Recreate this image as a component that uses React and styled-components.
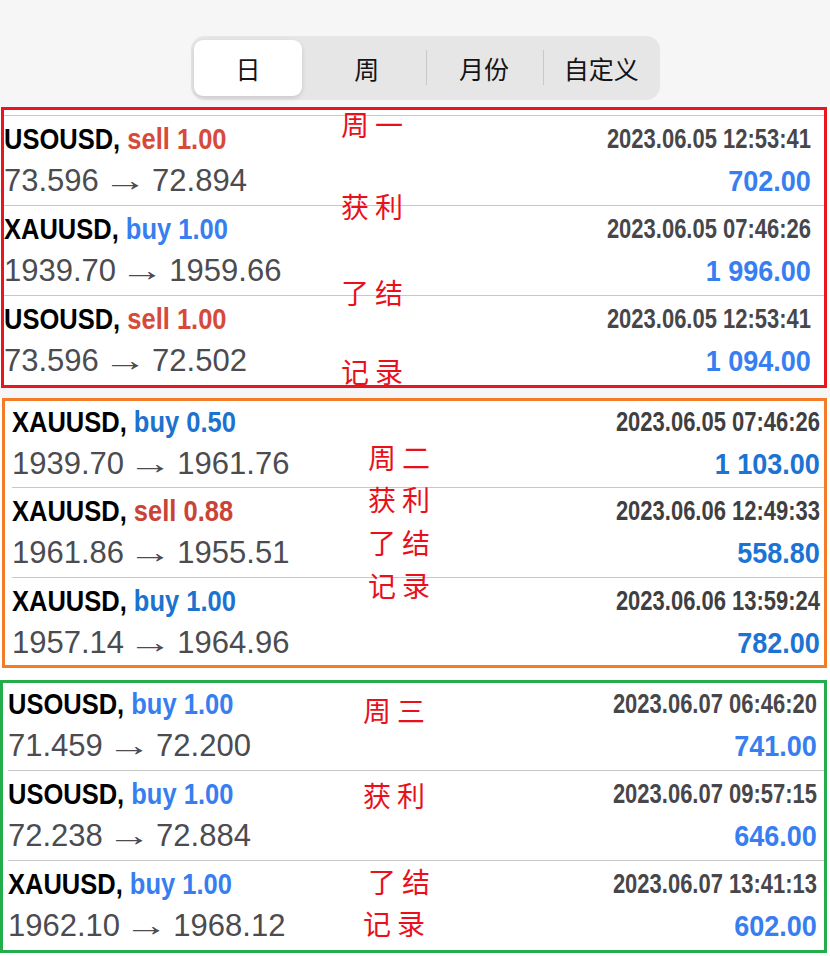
import React from "react";
import styled, { createGlobalStyle, css } from "styled-components";

const GlobalStyle = createGlobalStyle`
  html, body { margin: 0; padding: 0; background: #ffffff; }
  body { width: 830px; font-family: "Liberation Sans", Arial, sans-serif; }
`;

const Page = styled.div`
  display: flex;
  flex-direction: column;
  width: 830px;
  background: #ffffff;
`;

const Header = styled.header`
  box-sizing: border-box;
  height: 107px;
  padding: 36px 0 0 191px;
  background: #f6f6f6;
`;

const Segmented = styled.div`
  display: grid;
  grid-template-columns: repeat(4, 1fr);
  width: 469px;
  height: 64px;
  border-radius: 14px;
  background: #e6e6e7;
`;

const Segment = styled.div`
  position: relative;
  display: flex;
  align-items: center;
  justify-content: center;
  font-family: "Noto Sans CJK SC", sans-serif;
  font-size: 25px;
  color: #141414;
  ${(p) =>
    p.$active &&
    css`
      margin: 4px 6px 4px 3px;
      background: #ffffff;
      border-radius: 9px;
      box-shadow: 0 2px 5px rgba(0, 0, 0, 0.13);
    `}
  ${(p) =>
    p.$divider &&
    css`
      &::before {
        content: "";
        position: absolute;
        left: 0;
        top: 14px;
        bottom: 15px;
        width: 1px;
        background: #c9c9c9;
      }
    `}
`;

const Spacer = styled.div`
  flex: none;
  height: ${(p) => p.$h}px;
  background: ${(p) => p.$bg};
`;

const Box = styled.section`
  position: relative;
  flex: none;
  box-sizing: border-box;
  display: flex;
  flex-direction: column;
  overflow: hidden;
  margin-left: ${(p) => p.$ml}px;
  width: ${(p) => p.$w}px;
  height: ${(p) => p.$h}px;
  padding-top: ${(p) => p.$pt}px;
  border: 3px solid ${(p) => p.$color};
  background: #ffffff;
`;

const Row = styled.div`
  flex: none;
  box-sizing: border-box;
  display: flex;
  justify-content: space-between;
  height: ${(p) => p.$h}px;
  margin-left: ${(p) => p.$inset}px;
  padding: ${(p) => p.$pt}px ${(p) => p.$pr}px 0 0;
  border-top: ${(p) => (p.$sep ? "1px solid #c8c8c8" : "none")};
`;

const Main = styled.div`
  display: flex;
  flex-direction: column;
  align-items: flex-start;
`;

const Title = styled.div`
  font-weight: 700;
  font-size: 30px;
  line-height: 36px;
  color: #000000;
  white-space: nowrap;
  transform: scaleX(0.85);
  transform-origin: left center;
`;

const Action = styled.span`
  color: ${(p) => p.$color};
`;

const Price = styled.div`
  margin-top: 4px;
  font-size: 31px;
  line-height: 40px;
  color: #4b4b50;
  white-space: nowrap;
`;

const Arrow = styled.span`
  display: inline-block;
  margin: 0 2.5px;
  transform: scaleX(1.43);
  transform-origin: center;
`;

const Side = styled.div`
  display: flex;
  flex-direction: column;
  align-items: flex-end;
`;

const Stamp = styled.div`
  font-weight: 700;
  font-size: 28px;
  line-height: 36px;
  color: ${(p) => p.$color};
  white-space: nowrap;
  transform: scaleX(0.785);
  transform-origin: right center;
`;

const Profit = styled.div`
  margin-top: 4px;
  font-weight: 700;
  font-size: 30px;
  line-height: 40px;
  color: ${(p) => p.$color};
  white-space: nowrap;
  transform: scaleX(0.9);
  transform-origin: right center;
`;

const Note = styled.div`
  position: absolute;
  left: ${(p) => p.$left}px;
  top: ${(p) => p.$top}px;
  font-family: "Noto Sans CJK SC", sans-serif;
  font-size: 28px;
  line-height: 28px;
  letter-spacing: 6px;
  color: #e8111b;
  white-space: nowrap;
  pointer-events: none;
`;

const SECTIONS = [
  {
    key: "mon",
    color: "#e8161f",
    ml: 1,
    w: 826,
    h: 281,
    pt: 5,
    inset: 0,
    pr: 13,
    firstSep: true,
    firstH: 90,
    palette: { buy: "#377ef0", sell: "#d74a3a", profit: "#377ef0", stamp: "#47474b" },
    notes: [
      { t: "周一", top: 0, left: 337 },
      { t: "获利", top: 82, left: 337 },
      { t: "了结", top: 168, left: 337 },
      { t: "记录", top: 247, left: 337 },
    ],
    rows: [
      ["USOUSD", "sell", "1.00", "73.596", "72.894", "2023.06.05 12:53:41", "702.00"],
      ["XAUUSD", "buy", "1.00", "1939.70", "1959.66", "2023.06.05 07:46:26", "1 996.00"],
      ["USOUSD", "sell", "1.00", "73.596", "72.502", "2023.06.05 12:53:41", "1 094.00"],
    ],
  },
  {
    key: "tue",
    color: "#f47b28",
    ml: 2,
    w: 825,
    h: 270,
    pt: 0,
    inset: 7,
    pr: 4,
    firstSep: false,
    firstH: 86,
    palette: { buy: "#1c72cf", sell: "#c94437", profit: "#1b73d4", stamp: "#3f3f42" },
    notes: [
      { t: "周二", top: 42, left: 363 },
      { t: "获利", top: 84, left: 363 },
      { t: "了结", top: 127, left: 363 },
      { t: "记录", top: 170, left: 363 },
    ],
    rows: [
      ["XAUUSD", "buy", "0.50", "1939.70", "1961.76", "2023.06.05 07:46:26", "1 103.00"],
      ["XAUUSD", "sell", "0.88", "1961.86", "1955.51", "2023.06.06 12:49:33", "558.80"],
      ["XAUUSD", "buy", "1.00", "1957.14", "1964.96", "2023.06.06 13:59:24", "782.00"],
    ],
  },
  {
    key: "wed",
    color: "#23ae4b",
    ml: 0,
    w: 827,
    h: 273,
    pt: 0,
    inset: 5,
    pr: 7,
    firstSep: false,
    firstH: 87,
    palette: { buy: "#377ef0", sell: "#d74a3a", profit: "#377ef0", stamp: "#47474b" },
    notes: [
      { t: "周三", top: 13, left: 360 },
      { t: "获利", top: 98, left: 360 },
      { t: "了结", top: 184, left: 365 },
      { t: "记录", top: 226, left: 360 },
    ],
    rows: [
      ["USOUSD", "buy", "1.00", "71.459", "72.200", "2023.06.07 06:46:20", "741.00"],
      ["USOUSD", "buy", "1.00", "72.238", "72.884", "2023.06.07 09:57:15", "646.00"],
      ["XAUUSD", "buy", "1.00", "1962.10", "1968.12", "2023.06.07 13:41:13", "602.00"],
    ],
  },
];

const TABS = ["日", "周", "月份", "自定义"];

function TradeRow({ data, section, index }) {
  const [sym, side, vol, from, to, time, profit] = data;
  const first = index === 0;
  const sep = first ? section.firstSep : true;
  const pad = sep ? 5 : 3;
  return (
    <Row
      $h={first ? section.firstH : 90}
      $inset={section.inset}
      $pr={section.pr}
      $pt={pad}
      $sep={sep}
    >
      <Main>
        <Title>
          {sym}, <Action $color={section.palette[side]}>{side} {vol}</Action>
        </Title>
        <Price>
          {from} <Arrow>→</Arrow> {to}
        </Price>
      </Main>
      <Side>
        <Stamp $color={section.palette.stamp}>{time}</Stamp>
        <Profit $color={section.palette.profit}>{profit}</Profit>
      </Side>
    </Row>
  );
}

export default function App() {
  return (
    <Page>
      <GlobalStyle />
      <Header>
        <Segmented>
          {TABS.map((t, i) => (
            <Segment key={t} $active={i === 0} $divider={i >= 2}>
              {t}
            </Segment>
          ))}
        </Segmented>
      </Header>
      {SECTIONS.map((s, si) => (
        <React.Fragment key={s.key}>
          <Box $ml={s.ml} $w={s.w} $h={s.h} $pt={s.pt} $color={s.color}>
            {s.rows.map((r, i) => (
              <TradeRow key={i} data={r} section={s} index={i} />
            ))}
            {s.notes.map((n) => (
              <Note key={n.t} $top={n.top} $left={n.left}>
                {n.t}
              </Note>
            ))}
          </Box>
          {si === 0 && <Spacer $h={10} $bg="#f6f6f6" />}
          {si === 1 && <Spacer $h={12} $bg="#ffffff" />}
        </React.Fragment>
      ))}
    </Page>
  );
}
